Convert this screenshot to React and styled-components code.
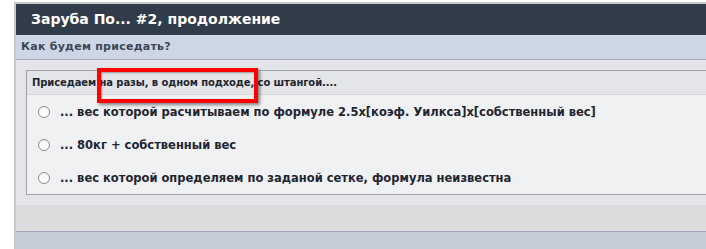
import React from 'react'
import styled, { createGlobalStyle } from 'styled-components'

const GlobalStyle = createGlobalStyle`
  html, body {
    margin: 0;
    padding: 0;
    background: #fff;
    overflow: hidden;
  }
  body {
    font-family: 'DejaVu Sans', Verdana, sans-serif;
  }
`

const Frame = styled.div`
  box-sizing: border-box;
  margin: 2px 0 0 14px;
  border-top: 2px solid #c9c9c9;
  border-left: 2px solid #c9c9c9;
  height: calc(100vh - 2px);
  display: flex;
  flex-direction: column;
  overflow: hidden;
`

const Title = styled.h1`
  margin: 0;
  height: 31px;
  background: #313c4b;
  color: #fff;
  font-size: 14px;
  font-weight: bold;
  line-height: 31px;
  padding-left: 15px;
`

const SubTitle = styled.h2`
  margin: 0;
  height: 24px;
  background: #cdd6e5;
  border-bottom: 1px solid #a0a8b5;
  color: #3b4756;
  font-size: 11px;
  letter-spacing: 0.25px;
  font-weight: bold;
  line-height: 24px;
  padding-left: 5px;
`

const Body = styled.div`
  background: #e4e5e8;
  padding: 10px 0 10px 10px;
`

const PollBox = styled.div`
  position: relative;
  border: 1px solid #a3a3a3;
  border-right: none;
`

const Question = styled.div`
  height: 23px;
  line-height: 23px;
  background: #e4e5e8;
  border-bottom: 1px solid #d8d8d8;
  padding-left: 5px;
  font-size: 10px;
  letter-spacing: -0.1px;
  font-weight: bold;
  color: #1c2430;
`

const Options = styled.ul`
  list-style: none;
  margin: 0;
  padding: 0;
  background: #f0f1f3;
`

const Option = styled.li`
  height: 33px;
  display: flex;
  align-items: center;
  gap: 10px;
  padding-left: 11px;
  font-size: 11.5px;
  font-weight: bold;
  color: #1e2530;
`

const Radio = styled.span`
  width: 10px;
  height: 10px;
  border-radius: 50%;
  border: 1px solid #8c8c8c;
  background: linear-gradient(#f4f4f4, #fff);
  flex-shrink: 0;
`

const Highlight = styled.div`
  position: absolute;
  left: 70px;
  top: -3px;
  width: 153px;
  height: 27px;
  border: 4px solid #f00;
  box-shadow: 2px 2px 3px rgba(0, 0, 0, 0.45), inset 1px 1px 2px rgba(0, 0, 0, 0.35);
  pointer-events: none;
`

const Footer = styled.div`
  flex-shrink: 0;
  height: 26px;
  background: #dcdcdc;
  border-bottom: 1px solid #a0a8b5;
`

const Bottom = styled.div`
  flex: 1;
  background: #c5ccd5;
`

const options = [
  '... вес которой расчитываем по формуле 2.5x[коэф. Уилкса]x[собственный вес]',
  '... 80кг + собственный вес',
  '... вес которой определяем по заданой сетке, формула неизвестна',
]

export default function App() {
  return (
    <>
      <GlobalStyle />
      <Frame>
        <Title>Заруба По... #2, продолжение</Title>
        <SubTitle>Как будем приседать?</SubTitle>
        <Body>
          <PollBox>
            <Question>Приседаем на разы, в одном подходе, со штангой....</Question>
            <Options>
              {options.map((text) => (
                <Option key={text}>
                  <Radio />
                  {text}
                </Option>
              ))}
            </Options>
            <Highlight />
          </PollBox>
        </Body>
        <Footer />
        <Bottom />
      </Frame>
    </>
  )
}
